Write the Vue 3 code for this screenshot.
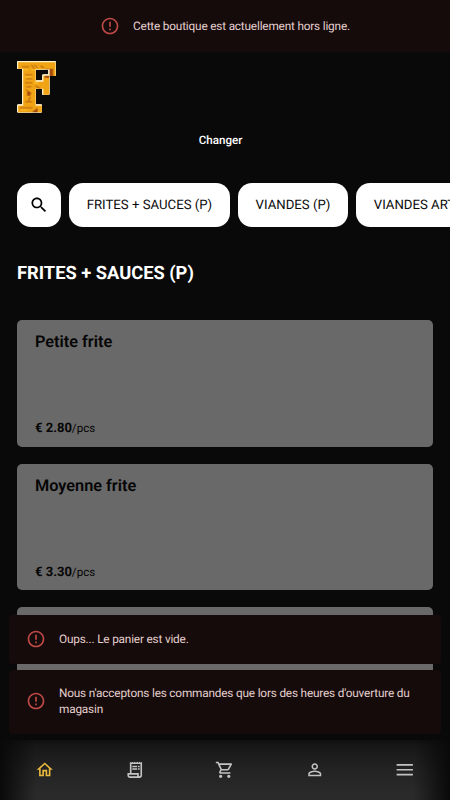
<script setup>
const alertPath =
  'M11 15h2v2h-2zm0-8h2v6h-2zm.99-5C6.47 2 2 6.48 2 12s4.47 10 9.99 10C17.52 22 22 17.52 22 12S17.52 2 11.99 2zM12 20c-4.42 0-8-3.58-8-8s3.58-8 8-8 8 3.58 8 8-3.58 8-8 8z'

const categories = ['FRITES + SAUCES (P)', 'VIANDES (P)', 'VIANDES ARTISANALES (P)']

const products = [
  { name: 'Petite frite', price: '2.80' },
  { name: 'Moyenne frite', price: '3.30' },
  { name: '', price: '' },
]

const toasts = [
  'Oups... Le panier est vide.',
  "Nous n'acceptons les commandes que lors des heures d'ouverture du magasin",
]

const navItems = [
  { id: 'home', active: true, path: 'M12 5.69l5 4.5V18h-2v-6H9v6H7v-7.81l5-4.5M12 3L2 12h3v8h6v-6h2v6h6v-8h3L12 3z' },
  {
    id: 'orders',
    path: 'M19.5 3.5L18 2l-1.5 1.5L15 2l-1.5 1.5L12 2l-1.5 1.5L9 2 7.5 3.5 6 2v14H3v3c0 1.66 1.34 3 3 3h12c1.66 0 3-1.34 3-3V2l-1.5 1.5zM15 20H6c-.55 0-1-.45-1-1v-1h10v2zm4-1c0 .55-.45 1-1 1s-1-.45-1-1v-3H8V5h11v14zM9 7h6v2H9zM16 7h2v2h-2zM9 10h6v2H9zM16 10h2v2h-2z',
  },
  {
    id: 'cart',
    path: 'M15.55 13c.75 0 1.41-.41 1.75-1.03l3.58-6.49c.37-.66-.11-1.48-.87-1.48H5.21l-.94-2H1v2h2l3.6 7.59-1.35 2.44C4.52 15.37 5.48 17 7 17h12v-2H7l1.1-2h7.45zM6.16 6h12.15l-2.76 5H8.53L6.16 6zM7 18c-1.1 0-1.99.9-1.99 2S5.9 22 7 22s2-.9 2-2-.9-2-2-2zm10 0c-1.1 0-1.99.9-1.99 2s.89 2 1.99 2 2-.9 2-2-.9-2-2-2z',
  },
  {
    id: 'account',
    path: 'M12 5.9c1.16 0 2.1.94 2.1 2.1s-.94 2.1-2.1 2.1S9.9 9.16 9.9 8s.94-2.1 2.1-2.1m0 9c2.97 0 6.1 1.46 6.1 2.1v1.1H5.9V17c0-.64 3.13-2.1 6.1-2.1M12 4C9.79 4 8 5.79 8 8s1.79 4 4 4 4-1.79 4-4-1.79-4-4-4zm0 9c-2.67 0-8 1.34-8 4v3h16v-3c0-2.66-5.33-4-8-4z',
  },
  { id: 'menu', path: 'M2 5h20v2H2zm0 6h20v2H2zm0 6h20v2H2z' },
]
</script>

<template>
  <div class="screen">
    <header class="offline">
      <svg class="alert" viewBox="0 0 24 24"><path :d="alertPath" /></svg>
      <span>Cette boutique est actuellement hors ligne.</span>
    </header>

    <main class="content">
      <svg class="logo" viewBox="0 0 42 56">
        <defs>
          <pattern id="doodles" width="60" height="60" patternUnits="userSpaceOnUse" patternTransform="scale(1.25 1) translate(0 -50)">
            <rect width="60" height="60" fill="#f0a414" />
            <path d="M5 6h7M14 4l3 4M17 4l3 3M23 5l3 2M8 14h7M9 18h6M8 22h7M9 26h5M18 25l5 3M9 29l5 4M13 36l-2 5M8 41h7M3 47h12" stroke="#b4620f" stroke-width="1" />
            <path d="M27 8h8v9h-8zM10 31h3v4h-3zM14 52l6-5v5z" fill="#a84d0c" />
            <path d="M3 9h8M8 16h6M16 22h5M4 49h6M14 9h8" stroke="#ffc52e" stroke-width="1" />
          </pattern>
        </defs>
        <g class="logo-letter" transform="translate(-.2 50.8) scale(.83 1)">
          <text>F</text>
        </g>
      </svg>

      <button class="change">Changer</button>

      <nav class="chips">
        <button class="chip search">
          <svg viewBox="0 0 24 24"><path d="M15.5 14h-.79l-.28-.27C15.41 12.59 16 11.11 16 9.5 16 5.91 13.09 3 9.5 3S3 5.91 3 9.5 5.91 16 9.5 16c1.61 0 3.09-.59 4.23-1.57l.27.28v.79l5 4.99L20.49 19l-4.99-5zm-6 0C7.01 14 5 11.99 5 9.5S7.01 5 9.5 5 14 7.01 14 9.5 11.99 14 9.5 14z" /></svg>
        </button>
        <button v-for="c in categories" :key="c" class="chip">{{ c }}</button>
      </nav>

      <h1 class="title">FRITES + SAUCES (P)</h1>

      <section class="products">
        <article v-for="(p, i) in products" :key="i" class="card">
          <h2>{{ p.name }}</h2>
          <p v-if="p.price"><b>€ {{ p.price }}</b>/pcs</p>
        </article>
      </section>
    </main>

    <div class="bottom">
      <div class="toasts">
        <div v-for="t in toasts" :key="t" class="toast">
          <svg class="alert" viewBox="0 0 24 24"><path :d="alertPath" /></svg>
          <span>{{ t }}</span>
        </div>
      </div>
      <nav class="tabs">
        <a v-for="n in navItems" :key="n.id" class="tab" :class="{ active: n.active }">
          <svg viewBox="0 0 24 24"><path :d="n.path" /></svg>
        </a>
      </nav>
    </div>
  </div>
</template>

<style>
body {
  background: #090909;
  overflow: hidden;
}
</style>

<style scoped>
.screen {
  position: relative;
  width: 450px;
  height: 800px;
  overflow: hidden;
  background: #090909;
  color: #fff;
  font-family: Roboto, sans-serif;
  text-rendering: geometricPrecision;
}
.screen * {
  box-sizing: border-box;
}
button {
  border: 0;
  font: inherit;
  text-rendering: inherit;
}
.offline {
  height: 52px;
  display: flex;
  align-items: center;
  justify-content: center;
  gap: 13px;
  background: #160b0b;
  color: #e4cfce;
  font-size: 11.8px;
  letter-spacing: -0.18px;
}
.alert {
  width: 20px;
  height: 20px;
  margin: -3px 0;
  flex: none;
  fill: #bd4a45;
}
.content {
  display: flex;
  flex-direction: column;
  padding: 8px 17px 0;
}
.logo {
  width: 42px;
  height: 56px;
  display: block;
  overflow: visible;
}
.logo-letter {
  font: bold 65px 'DejaVu Serif', serif;
  fill: url(#doodles);
  stroke: url(#doodles);
  stroke-width: 2.6px;
  filter: drop-shadow(0.8px 0 0 #fff0c8) drop-shadow(-0.8px 0 0 #fff0c8) drop-shadow(0 0.8px 0 #fff0c8) drop-shadow(0 -0.8px 0 #fff0c8);
}
.change {
  align-self: center;
  margin: 14px 9px 0 0;
  padding: 0;
  height: 20px;
  line-height: 20px;
  background: none;
  color: #fff;
  font-size: 11.6px;
  font-weight: 500;
}
.chips {
  display: flex;
  gap: 8px;
  margin-top: 33px;
  margin-right: -17px;
  overflow: hidden;
}
.chip {
  flex: none;
  height: 44px;
  padding: 1px 17.7px 0;
  border-radius: 14px;
  background: #fff;
  color: #0a0a0a;
  font-size: 13.2px;
  white-space: nowrap;
}
.search {
  width: 44px;
  padding: 0;
  display: flex;
  align-items: center;
  justify-content: center;
}
.search svg {
  width: 20px;
  height: 20px;
}
.title {
  margin: 35px 0 0;
  font-size: 18.3px;
  line-height: 24px;
  font-weight: 700;
}
.products {
  display: flex;
  flex-direction: column;
  gap: 17px;
  margin-top: 34.3px;
}
.card {
  height: 126.5px;
  width: 416px;
  display: flex;
  flex-direction: column;
  justify-content: space-between;
  padding: 11px 18px 8.5px;
  border-radius: 5px;
  background: #696969;
  color: #050505;
}
.card h2 {
  margin: 0;
  font-size: 16.3px;
  line-height: 22px;
  font-weight: 600;
}
.card p {
  margin: 0;
  font-size: 11.6px;
  line-height: 18px;
}
.card b {
  font-size: 13px;
}
.bottom {
  position: absolute;
  left: 0;
  right: 0;
  bottom: 0;
}
.toasts {
  display: flex;
  flex-direction: column;
  gap: 5.5px;
  padding: 0 9px 5.5px;
}
.toast {
  min-height: 49px;
  display: flex;
  align-items: center;
  gap: 13px;
  padding: 15px 17px 16.5px;
  border-radius: 4px;
  background: #160b0b;
  color: #e4cfce;
  font-size: 11.8px;
  line-height: 16.5px;
  letter-spacing: -0.18px;
}
.tabs {
  height: 60.5px;
  display: flex;
  align-items: center;
  background:
    linear-gradient(90deg, #090909 0, rgba(9, 9, 9, 0) 36px, rgba(9, 9, 9, 0) 414px, #090909 100%),
    linear-gradient(#101010 0, #171717 6px, #232323 30px, #2a2a2a 54px);
}
.tab {
  flex: 1;
  display: flex;
  justify-content: center;
  color: #c3c3c3;
}
.tab.active {
  color: #e9b83c;
}
.tab svg {
  width: 19.5px;
  height: 19.5px;
  fill: currentColor;
}
</style>
